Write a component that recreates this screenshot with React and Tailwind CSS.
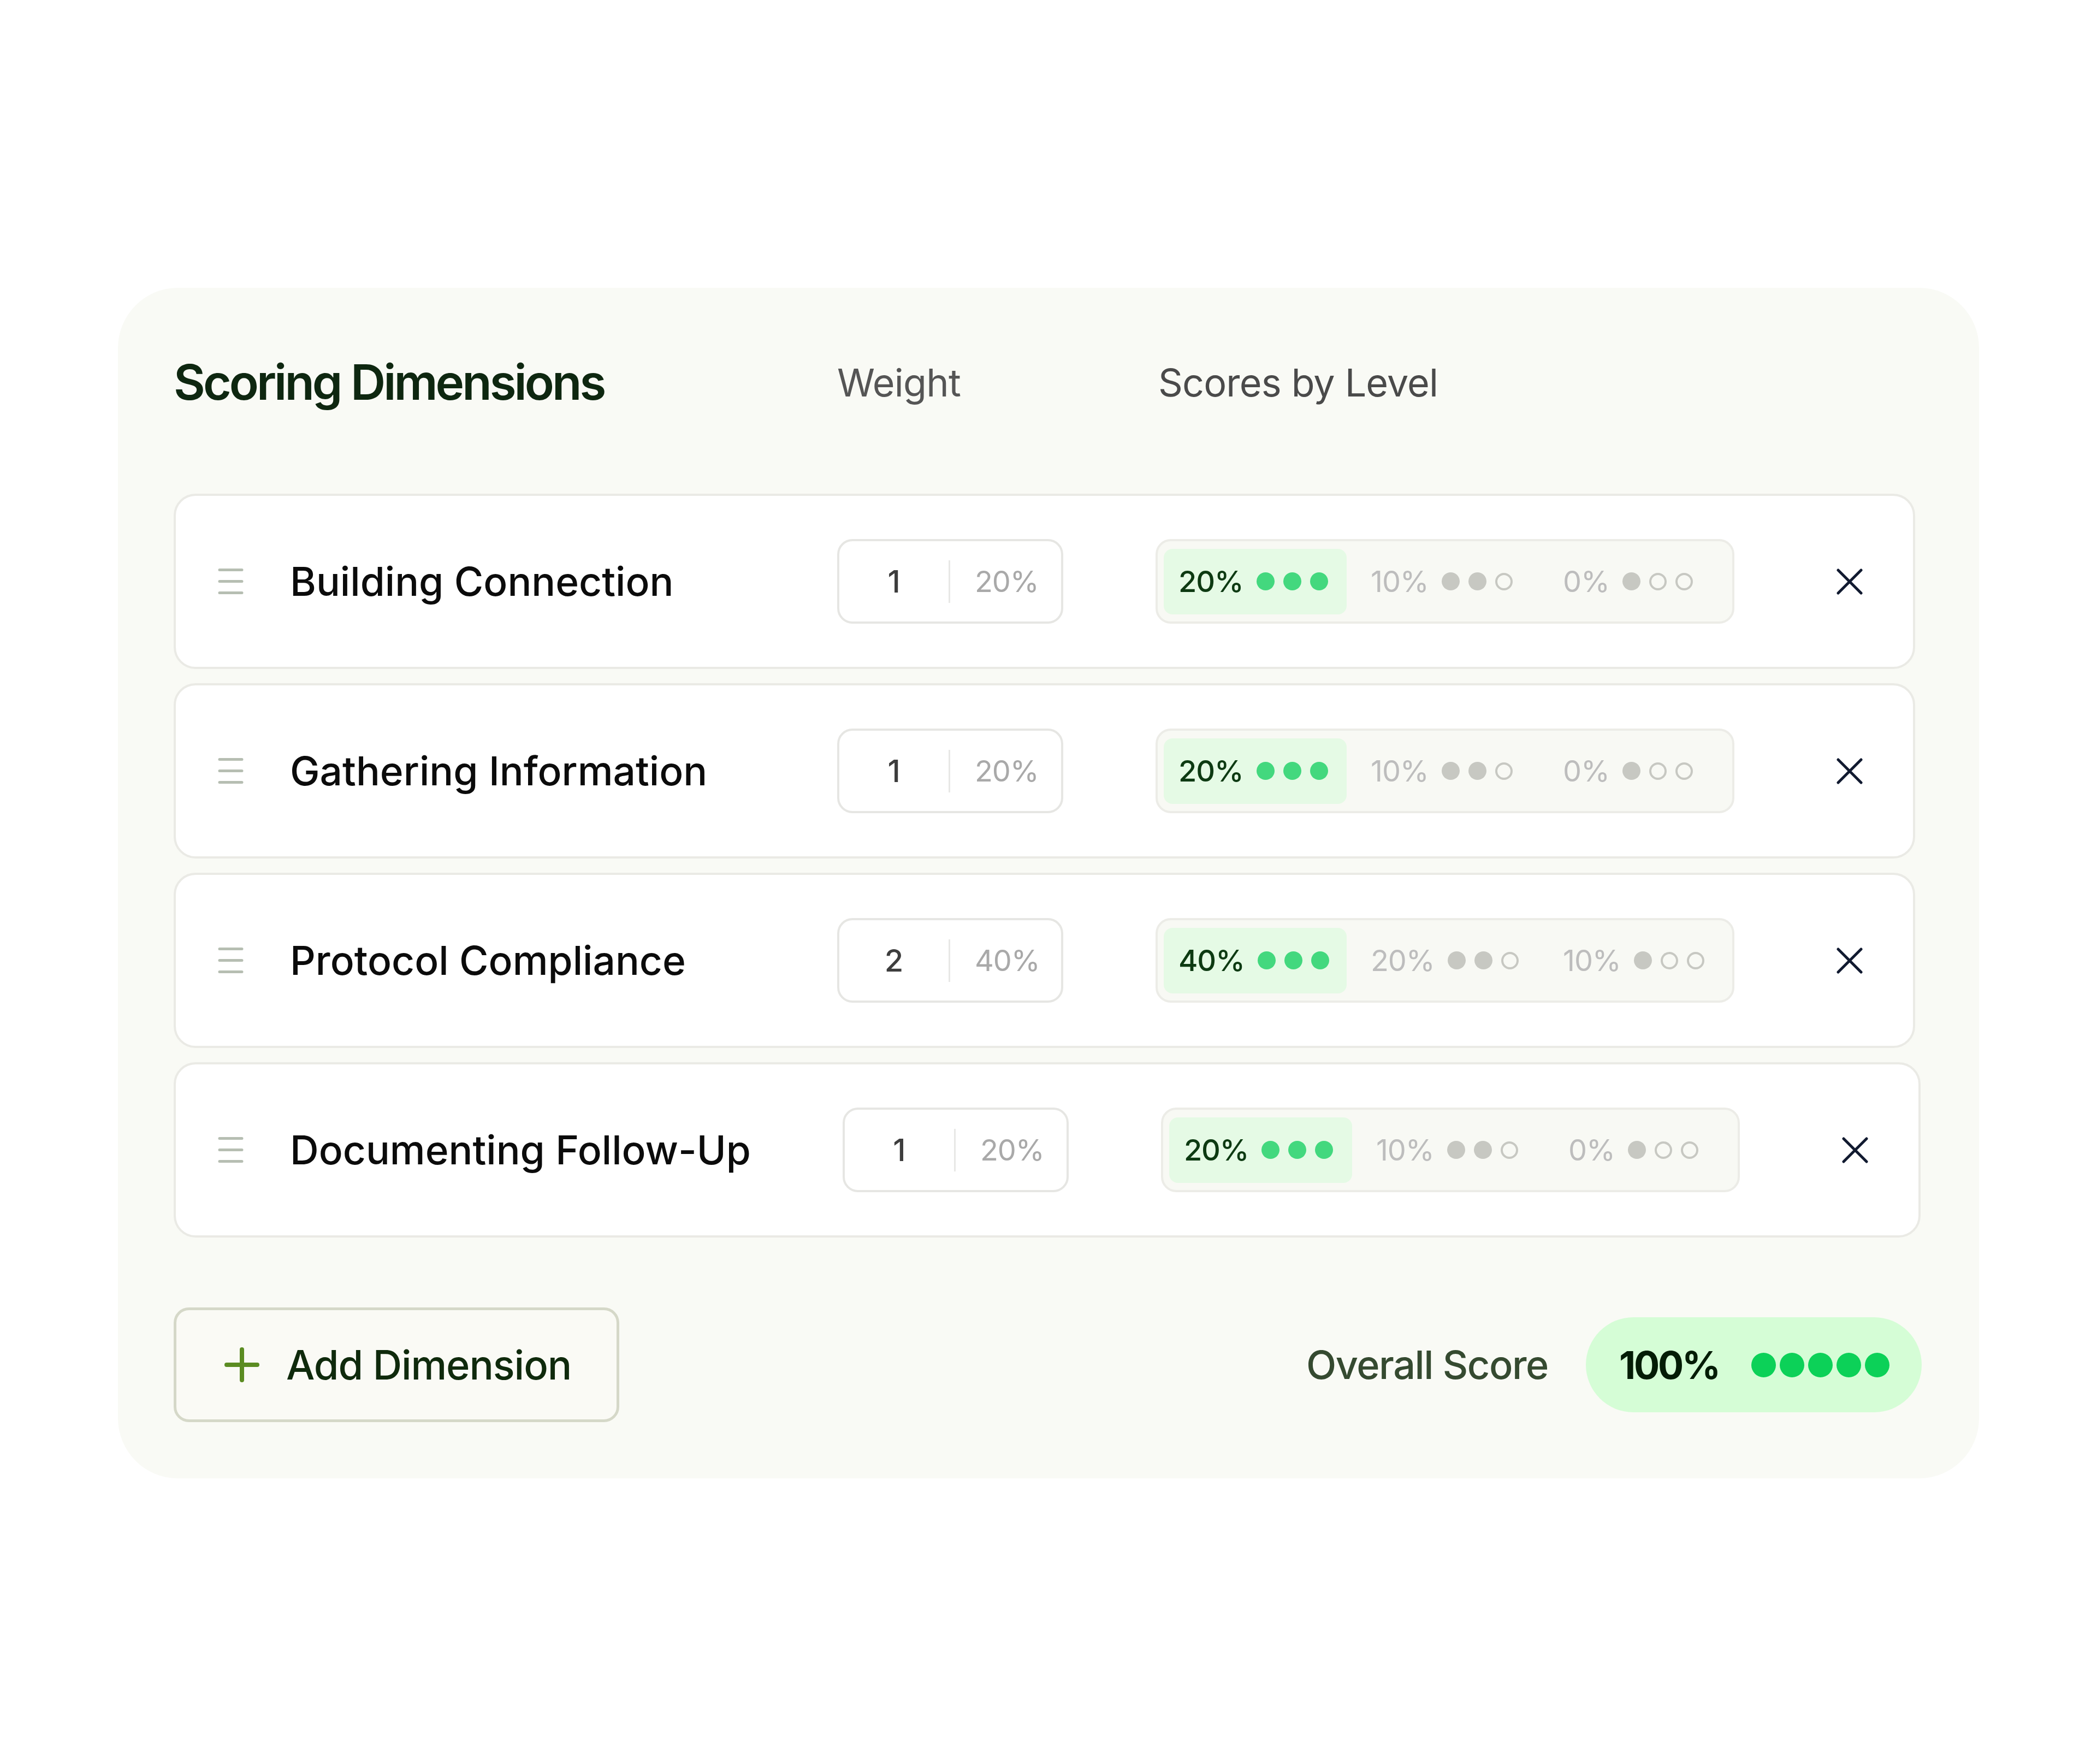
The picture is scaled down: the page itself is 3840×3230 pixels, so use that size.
const rows = [
  {
    name: 'Building Connection',
    weight: 1,
    share: '20%',
    levels: [
      { label: '20%', filled: 3 },
      { label: '10%', filled: 2 },
      { label: '0%', filled: 1 },
    ],
  },
  {
    name: 'Gathering Information',
    weight: 1,
    share: '20%',
    levels: [
      { label: '20%', filled: 3 },
      { label: '10%', filled: 2 },
      { label: '0%', filled: 1 },
    ],
  },
  {
    name: 'Protocol Compliance',
    weight: 2,
    share: '40%',
    levels: [
      { label: '40%', filled: 3 },
      { label: '20%', filled: 2 },
      { label: '10%', filled: 1 },
    ],
  },
  {
    name: 'Documenting Follow-Up',
    weight: 1,
    share: '20%',
    levels: [
      { label: '20%', filled: 3 },
      { label: '10%', filled: 2 },
      { label: '0%', filled: 1 },
    ],
  },
];

function Handle() {
  return (
    <svg viewBox="0 0 47 47" className="h-[47px] w-[47px] shrink-0">
      <path d="M3 2.5h41M3 23.5h41M3 44.5h41" stroke="#b6beb2" strokeWidth="5" strokeLinecap="round" />
    </svg>
  );
}

function Dots({ filled, active }) {
  return (
    <div className="flex items-center gap-[16px]">
      {[0, 1, 2].map((i) => {
        if (active) return <span key={i} className="h-[33px] w-[33px] rounded-full bg-[#43d87e]" />;
        if (i < filled) return <span key={i} className="h-[33px] w-[33px] rounded-full bg-[#c7c8c2]" />;
        return <span key={i} className="h-[32px] w-[32px] rounded-full border-[4px] border-[#c7c8c2]" />;
      })}
    </div>
  );
}

function DimensionRow({ row }) {
  return (
    <div className="flex w-max items-center rounded-[40px] border-[4px] border-[#eaeae5] bg-white py-[79px] pl-[77px] pr-[92px]">
      <Handle />
      <div className="ml-[85px] min-w-[834px] whitespace-nowrap text-[73px] font-medium text-[#0b0b0b]">
        {row.name}
      </div>

      {/* weight */}
      <div className="ml-[168px] flex h-[155px] w-[414px] shrink-0 items-center rounded-[28px] border-[4px] border-[#e6e6e3] bg-white">
        <div className="w-[200px] text-center text-[56px] font-medium text-[#3d3d3d]">{row.weight}</div>
        <div className="h-[78px] w-[3px] bg-[#e8e8e6]" />
        <div className="pl-[45px] text-[54px] tracking-[-0.02em] text-[#a9a9a9]">{row.share}</div>
      </div>

      {/* scores by level */}
      <div className="ml-[169px] flex h-[155px] w-[1060px] shrink-0 items-center gap-[17px] rounded-[28px] border-[4px] border-[#ecece7] bg-[#f8f9f4] pl-[11px]">
        {row.levels.map((lvl, i) => (
          <div
            key={i}
            className={`flex h-[120px] w-[335px] items-center gap-[24px] rounded-[16px] pl-[27px] ${i === 0 ? 'bg-[#e5fae5]' : ''}`}
          >
            <span className={`text-[54px] tracking-[-0.02em] ${i === 0 ? 'font-medium text-[#0d3a12]' : 'text-[#bdbdbd]'}`}>{lvl.label}</span>
            <Dots filled={lvl.filled} active={i === 0} />
          </div>
        ))}
      </div>

      <button className="ml-[187px] h-[48px] w-[48px] shrink-0">
        <svg viewBox="0 0 48 48" className="h-[48px] w-[48px]">
          <path d="M3 3l42 42M45 3L3 45" stroke="#111a30" strokeWidth="5" strokeLinecap="round" />
        </svg>
      </button>
    </div>
  );
}

export default function App() {
  return (
    <div className="min-h-[3230px] bg-white pl-[216px] pt-[527px] font-['Inter',sans-serif]">
      <div className="w-[3408px] rounded-[110px] bg-[#f9faf5] pb-[103px] pl-[102px] pr-[105px] pt-[100px]">
        {/* header */}
        <div className="mb-[131px] flex h-[146px] items-center">
          <div className="w-[1215px] text-[89px] font-semibold tracking-[-0.045em] text-[#0e2710]">Scoring Dimensions</div>
          <div className="w-[583px] text-[70px] tracking-[-0.01em] text-[#555555]">Weight</div>
          <div className="pl-[5px] text-[70px] tracking-[-0.012em] text-[#4a4a4a]">Scores by Level</div>
        </div>

        {/* rows */}
        <div className="flex flex-col items-start gap-[26px]">
          {rows.map((row) => (
            <DimensionRow key={row.name} row={row} />
          ))}
        </div>

        {/* footer */}
        <div className="mt-[128px] flex items-center justify-between">
          <button className="flex h-[210px] items-center rounded-[28px] border-[5px] border-[#d5d8c8] bg-[#fafaf5] pl-[88px] pr-[83px]">
            <svg viewBox="0 0 64 64" className="h-[64px] w-[64px]">
              <path d="M32 4v56M4 32h56" stroke="#5b8c22" strokeWidth="8" strokeLinecap="round" />
            </svg>
            <span className="ml-[49px] text-[74px] font-medium tracking-[-0.015em] text-[#0f2a0c]">Add Dimension</span>
          </button>

          <div className="flex items-center">
            <span className="mr-[69px] text-[72px] font-medium tracking-[-0.02em] text-[#354a30]">Overall Score</span>
            <div className="flex h-[174px] items-center rounded-full bg-[#d5fdd6] pl-[61px] pr-[59px]">
              <span className="text-[70px] font-bold tracking-[-0.045em] text-[#041c06]">100%</span>
              <div className="ml-[59px] flex gap-[7px]">
                {[0, 1, 2, 3, 4].map((i) => (
                  <span key={i} className="h-[45px] w-[45px] rounded-full bg-[#0cd158]" />
                ))}
              </div>
            </div>
          </div>
        </div>
      </div>
    </div>
  );
}
